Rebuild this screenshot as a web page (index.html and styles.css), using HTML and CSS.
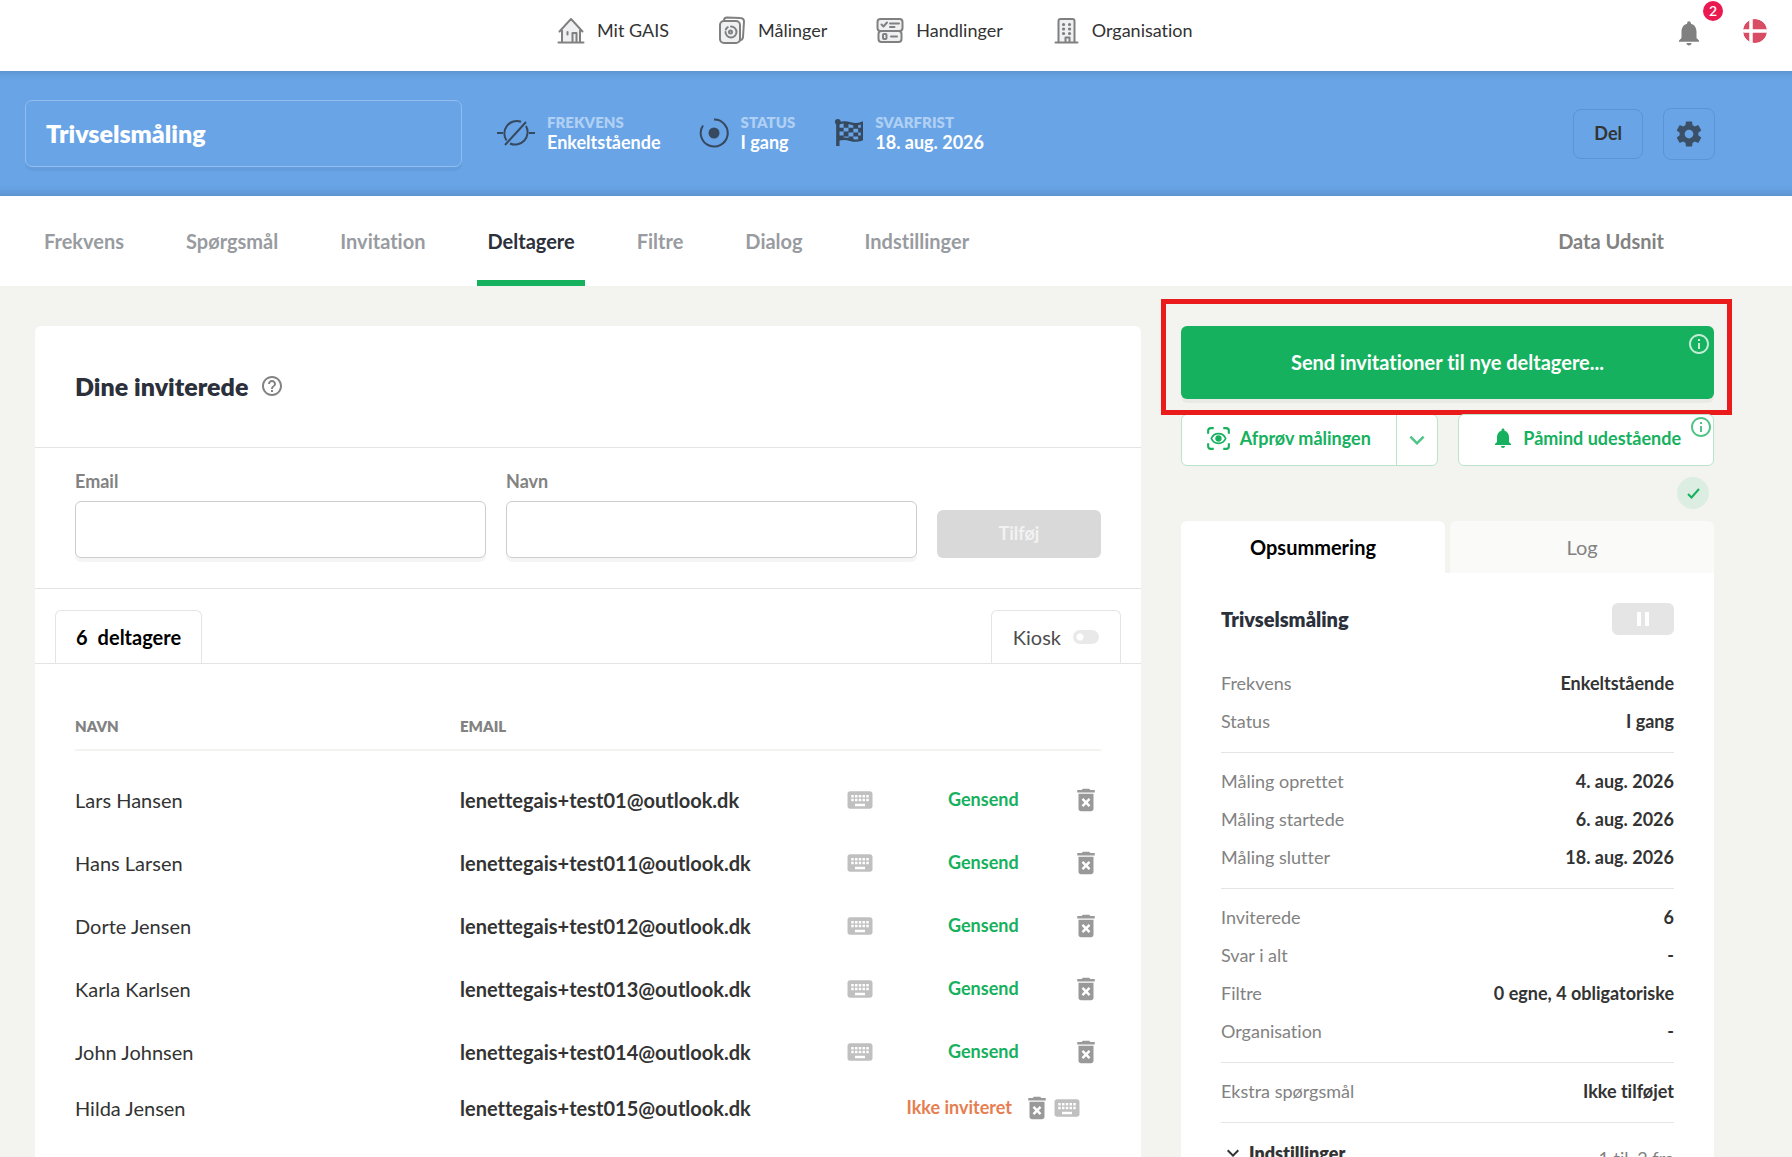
FILE: index.html
```html
<!doctype html>
<html lang="da">
  <head>
    <meta charset="utf-8">
    <title>Trivselsmåling</title>
    <link rel="stylesheet" href="styles.css">
  </head>
  <body>
    <svg class="sprite" aria-hidden="true">
      <symbol id="i-bell" viewBox="0 0 24 24"><path d="M12 22c1.1 0 2-.9 2-2h-4c0 1.1.89 2 2 2zm6-6v-5c0-3.07-1.64-5.64-4.5-6.32V4c0-.83-.67-1.5-1.500-1.500s-1.500.67-1.500 1.500v.68C7.630 5.360 6 7.920 6 11v5l-2 2v1h16v-1l-2-2z"/></symbol>
      <symbol id="i-keyboard" viewBox="0 0 24 24"><path d="M20 5H4c-1.100 0-1.990.9-1.990 2L2 17c0 1.100.9 2 2 2h16c1.100 0 2-.9 2-2V7c0-1.100-.9-2-2-2zm-9 3h2v2h-2V8zm0 3h2v2h-2v-2zM8 8h2v2H8V8zm0 3h2v2H8v-2zm-1 2H5v-2h2v2zm0-3H5V8h2v2zm9 7H8v-2h8v2zm0-4h-2v-2h2v2zm0-3h-2V8h2v2zm3 3h-2v-2h2v2zm0-3h-2V8h2v2z"/></symbol>
      <symbol id="i-trash" viewBox="0 0 24 24"><path d="M6 19c0 1.100.9 2 2 2h8c1.100 0 2-.9 2-2V7H6v12zm2.460-7.120l1.410-1.410L12 12.590l2.120-2.120 1.410 1.410L13.410 14l2.120 2.120-1.410 1.410L12 15.410l-2.120 2.120-1.410-1.410L10.590 14l-2.130-2.120zM15.500 4l-1-1h-5l-1 1H5v2h14V4z"/></symbol>
      <symbol id="i-info" viewBox="0 0 24 24"><path d="M11 7h2v2h-2zm0 4h2v6h-2zm1-9C6.480 2 2 6.480 2 12s4.480 10 10 10 10-4.480 10-10S17.520 2 12 2zm0 18c-4.410 0-8-3.590-8-8s3.590-8 8-8 8 3.590 8 8-3.590 8-8 8z"/></symbol>
      <symbol id="i-chevron" viewBox="0 0 24 24"><path d="M7.410 8.590L12 13.170l4.590-4.580L18 10l-6 6-6-6z"/></symbol>
    </svg>

    <div class="app">
      <header class="topbar">
        <nav class="main-nav">
          <a href="#">
            <svg class="nav-icon" viewBox="0 0 28 28"><path d="M5 15v10h18V15L14 5z" fill="#eef0f2" stroke="none"/><path d="M1.500 26.500h25M5 26V14.500M23 26V14.500M2.500 15.500L14 3l11.500 12.500M10.500 16v2.500M15.500 26v-9h4v9"/></svg>
            Mit GAIS
          </a>
          <a href="#">
            <svg class="nav-icon" viewBox="0 0 28 28"><path d="M6 4.500Q6 1.500 9 1.500l13 .5q4 0 4 3.500L25 21q-.3 3-3 3.500"/><rect x="2" y="5" width="20" height="22" rx="4" fill="#eef0f2"/><path d="M13 10.500a5.500 5.500 0 1 1-5.500 5.500"/><path d="M7.800 13.500a6 6 0 0 1 2-2.300"/><circle cx="12.500" cy="16" r="1.500"/></svg>
            Målinger
          </a>
          <a href="#">
            <svg class="nav-icon" viewBox="0 0 28 28"><rect x="1.500" y="3" width="25" height="12" rx="3" fill="#eef0f2"/><rect x="2.500" y="15" width="23" height="11" rx="3" fill="#eef0f2"/><path d="M5.500 8.500l2 2 3.500-4M14 7.500h9M14 11h4.500M15 20.500h6"/><rect x="7" y="18" width="3.500" height="5" rx="1"/></svg>
            Handlinger
          </a>
          <a href="#">
            <svg class="nav-icon" viewBox="0 0 28 28"><path d="M6.500 26V5q0-2 2-2h12q2 0 2 2v21" fill="#eef0f2"/><path d="M3.500 26.500h22M13.500 26v-4.500h4V26"/><path d="M11.500 8.500h.1M17.500 8.500h.1M11.500 13h.1M17.500 13h.1M11.500 17.500h.1M17.500 17.500h.1" stroke-width="3.200"/></svg>
            Organisation
          </a>
        </nav>
        <div class="top-actions">
          <button class="icon-btn bell" aria-label="Notifikationer">
            <svg class="icon-lg"><use href="#i-bell"/></svg>
            <span class="badge">2</span>
          </button>
          <button class="icon-btn" aria-label="Sprog">
            <svg class="flag" viewBox="0 0 24 24"><circle cx="12" cy="12" r="12" fill="#d84d63"/><path d="M8 0v24M0 12h24" stroke="#fff" stroke-width="3.500"/></svg>
          </button>
        </div>
      </header>

      <section class="survey-bar">
        <input class="survey-name" type="text" value="Trivselsmåling" aria-label="Navn på måling">
        <div class="facts">
          <div class="fact">
            <svg class="fact-icon-wide" viewBox="0 0 38 30"><path d="M0 15h6M32 15h6M24 3.700A12.500 12.500 0 0 0 9.500 22.500M13 25.500A12.500 12.500 0 0 0 29 8M8 27L29 4"/></svg>
            <div><div class="fact-label">Frekvens</div><div class="fact-value">Enkeltstående</div></div>
          </div>
          <div class="fact">
            <svg class="fact-icon" viewBox="0 0 30 30"><path d="M15 1.500A13.500 13.500 0 1 1 4 7.500"/><circle cx="15" cy="15" r="5.500" fill="#36495f" stroke="none"/></svg>
            <div><div class="fact-label">Status</div><div class="fact-value">I gang</div></div>
          </div>
          <div class="fact">
            <svg class="fact-icon" viewBox="-2 -1 31 31"><path d="M3 3v25" stroke-width="3.500"/><circle cx="3" cy="3" r="3" fill="#36495f" stroke="none"/><path d="M4 4.500q6-2 12 0t12-.5v17q-6 2.500-12 .5T4 21" stroke-width="2.500"/><path d="M9 4h5v5H9zM19 5h5v5h-5zM4 9h5v4H4zM14 9h5v5h-5zM24 9h4v5h-4zM9 13h5v5H9zM19 14h5v4h-5zM4 17h5v4H4zM14 18h5v4h-5zM24 17h4v4h-4z" fill="#36495f" stroke="none"/></svg>
            <div><div class="fact-label">Svarfrist</div><div class="fact-value">18. aug. 2026</div></div>
          </div>
        </div>
        <div class="survey-actions">
          <button class="share-btn">Del</button>
          <button class="settings-btn" aria-label="Indstillinger">
            <svg class="icon-lg" viewBox="0 0 24 24"><path d="M19.430 12.980c.04-.32.07-.64.07-.98s-.03-.66-.07-.98l2.110-1.650c.19-.15.24-.42.12-.64l-2-3.460c-.12-.22-.39-.3-.61-.22l-2.490 1c-.52-.4-1.080-.73-1.690-.98l-.38-2.650C14.460 2.180 14.250 2 14 2h-4c-.25 0-.46.18-.49.42l-.38 2.650c-.61.25-1.170.59-1.690.98l-2.490-1c-.23-.09-.49 0-.61.22l-2 3.460c-.13.22-.07.49.12.64l2.110 1.650c-.04.32-.07.65-.07.98s.03.66.07.98l-2.110 1.650c-.19.15-.24.42-.12.64l2 3.460c.12.22.39.3.61.22l2.490-1c.52.4 1.080.73 1.690.98l.38 2.650c.03.24.24.42.49.42h4c.25 0 .46-.18.49-.42l.38-2.650c.61-.25 1.170-.59 1.690-.98l2.490 1c.23.09.49 0 .61-.22l2-3.460c.12-.22.07-.49-.12-.64l-2.110-1.650zM12 15.500c-1.930 0-3.500-1.570-3.500-3.500s1.570-3.500 3.500-3.500 3.500 1.570 3.500 3.500-1.570 3.500-3.500 3.500z"/></svg>
          </button>
        </div>
      </section>

      <nav class="tabs">
        <a href="#">Frekvens</a>
        <a href="#">Spørgsmål</a>
        <a href="#">Invitation</a>
        <a href="#" class="active">Deltagere</a>
        <a href="#">Filtre</a>
        <a href="#">Dialog</a>
        <a href="#">Indstillinger</a>
        <a href="#" class="tab-right">Data Udsnit</a>
      </nav>

      <main class="content">
        <section class="card">
          <div class="card-head">
            <h2>Dine inviterede</h2>
            <svg class="icon-sm" viewBox="0 0 24 24"><path d="M11 18h2v-2h-2v2zm1-16C6.480 2 2 6.480 2 12s4.480 10 10 10 10-4.480 10-10S17.520 2 12 2zm0 18c-4.410 0-8-3.590-8-8s3.590-8 8-8 8 3.590 8 8-3.590 8-8 8zm0-14c-2.210 0-4 1.790-4 4h2c0-1.100.9-2 2-2s2 .9 2 2c0 2-3 1.750-3 5h2c0-2.250 3-2.500 3-5 0-2.210-1.790-4-4-4z"/></svg>
          </div>

          <form class="add-form">
            <div class="field">
              <label for="email">Email</label>
              <input id="email" type="text">
            </div>
            <div class="field">
              <label for="name">Navn</label>
              <input id="name" type="text">
            </div>
            <button class="add-btn" type="button" disabled>Tilføj</button>
          </form>

          <div class="list-tabs">
            <button class="list-tab"><span>6</span><span>deltagere</span></button>
            <label class="list-tab kiosk">Kiosk <input type="checkbox" class="toggle"></label>
          </div>

          <table class="people">
            <thead>
              <tr>
                <th class="col-name">Navn</th>
                <th class="col-email">Email</th>
                <th class="col-kiosk"></th>
                <th class="col-send"></th>
                <th></th>
              </tr>
            </thead>
            <tbody>
              <tr>
                <td>Lars Hansen</td>
                <td class="email">lenettegais+test01@outlook.dk</td>
                <td><svg class="icon-lg light"><use href="#i-keyboard"/></svg></td>
                <td><button class="link-btn">Gensend</button></td>
                <td class="last"><button class="icon-btn" aria-label="Slet"><svg class="icon-lg"><use href="#i-trash"/></svg></button></td>
              </tr>
              <tr>
                <td>Hans Larsen</td>
                <td class="email">lenettegais+test011@outlook.dk</td>
                <td><svg class="icon-lg light"><use href="#i-keyboard"/></svg></td>
                <td><button class="link-btn">Gensend</button></td>
                <td class="last"><button class="icon-btn" aria-label="Slet"><svg class="icon-lg"><use href="#i-trash"/></svg></button></td>
              </tr>
              <tr>
                <td>Dorte Jensen</td>
                <td class="email">lenettegais+test012@outlook.dk</td>
                <td><svg class="icon-lg light"><use href="#i-keyboard"/></svg></td>
                <td><button class="link-btn">Gensend</button></td>
                <td class="last"><button class="icon-btn" aria-label="Slet"><svg class="icon-lg"><use href="#i-trash"/></svg></button></td>
              </tr>
              <tr>
                <td>Karla Karlsen</td>
                <td class="email">lenettegais+test013@outlook.dk</td>
                <td><svg class="icon-lg light"><use href="#i-keyboard"/></svg></td>
                <td><button class="link-btn">Gensend</button></td>
                <td class="last"><button class="icon-btn" aria-label="Slet"><svg class="icon-lg"><use href="#i-trash"/></svg></button></td>
              </tr>
              <tr>
                <td>John Johnsen</td>
                <td class="email">lenettegais+test014@outlook.dk</td>
                <td><svg class="icon-lg light"><use href="#i-keyboard"/></svg></td>
                <td><button class="link-btn">Gensend</button></td>
                <td class="last"><button class="icon-btn" aria-label="Slet"><svg class="icon-lg"><use href="#i-trash"/></svg></button></td>
              </tr>
              <tr class="pending">
                <td>Hilda Jensen</td>
                <td class="email">lenettegais+test015@outlook.dk</td>
                <td colspan="3">
                  <div class="pending-actions">
                    <span class="not-invited">Ikke inviteret</span>
                    <button class="icon-btn" aria-label="Slet"><svg class="icon-lg"><use href="#i-trash"/></svg></button>
                    <svg class="icon-lg light"><use href="#i-keyboard"/></svg>
                  </div>
                </td>
              </tr>
            </tbody>
          </table>
        </section>

        <aside class="side">
          <div class="send-wrap">
            <button class="send-btn">Send invitationer til nye deltagere...</button>
            <svg class="icon-sm info info-white"><use href="#i-info"/></svg>
            <div class="highlight"></div>
          </div>

          <div class="side-actions">
            <div class="split-btn">
              <button class="try-btn">
                <svg class="try-icon" viewBox="0 0 24 24"><path d="M1.200 7V4Q1.200 1.200 4 1.200h3M17 1.200h3q2.800 0 2.800 2.800v3M22.800 17v3q0 2.800-2.800 2.800h-3M7 22.800H4Q1.200 22.800 1.200 20v-3" fill="none" stroke="currentColor" stroke-width="2.200"/><path d="M12 7c-3.500 0-6.200 2-7.500 5 1.300 3 4 5 7.500 5s6.200-2 7.500-5c-1.300-3-4-5-7.500-5z" fill="none" stroke="currentColor" stroke-width="1.800"/><circle cx="12" cy="12" r="3.300"/></svg>
                Afprøv målingen
              </button>
              <button class="more-btn" aria-label="Flere"><svg class="icon-lg"><use href="#i-chevron"/></svg></button>
            </div>
            <div class="remind">
              <button class="remind-btn">
                <svg class="icon-sm"><use href="#i-bell"/></svg>
                Påmind udestående
              </button>
              <svg class="icon-sm info"><use href="#i-info"/></svg>
            </div>
          </div>

          <div class="saved"><svg viewBox="0 0 32 32"><path d="M11 17l3.500 3.500 7.500-8.500"/></svg></div>

          <div class="side-tabs">
            <button class="side-tab active">Opsummering</button>
            <button class="side-tab">Log</button>
          </div>

          <div class="summary">
            <div class="summary-head">
              <h3>Trivselsmåling</h3>
              <button class="pause-btn" aria-label="Pause" disabled><svg viewBox="0 0 14 14"><path d="M1 0h4v14H1zM9 0h4v14H9z"/></svg></button>
            </div>
            <dl>
              <div><dt>Frekvens</dt><dd>Enkeltstående</dd></div>
              <div><dt>Status</dt><dd>I gang</dd></div>
            </dl>
            <dl>
              <div><dt>Måling oprettet</dt><dd>4. aug. 2026</dd></div>
              <div><dt>Måling startede</dt><dd>6. aug. 2026</dd></div>
              <div><dt>Måling slutter</dt><dd>18. aug. 2026</dd></div>
            </dl>
            <dl>
              <div><dt>Inviterede</dt><dd>6</dd></div>
              <div><dt>Svar i alt</dt><dd>-</dd></div>
              <div><dt>Filtre</dt><dd>0 egne, 4 obligatoriske</dd></div>
              <div><dt>Organisation</dt><dd>-</dd></div>
            </dl>
            <dl>
              <div><dt>Ekstra spørgsmål</dt><dd>Ikke tilføjet</dd></div>
            </dl>
            <div class="summary-foot">
              <button class="expand-btn"><svg class="icon-sm"><use href="#i-chevron"/></svg>Indstillinger</button>
              <span>1 til, 2 fra</span>
            </div>
          </div>
        </aside>
      </main>
    </div>
  </body>
</html>
```

FILE: styles.css
```css
:root {
  --green: #16b15e;
  --green-border: #b9e4ca;
  --blue: #68a4e6;
  --dark: #2b303b;
  --text: #333333;
  --muted: #828282;
  --line: #e4e4e4;
  --page: #f3f4ef;
}

* {
  box-sizing: border-box;
}

body {
  margin: 0;
  font-family: Lato, 'Liberation Sans', sans-serif;
  font-size: 18px;
  line-height: 22px;
  font-variant-ligatures: none;
  color: var(--text);
  background: var(--page);
}

a {
  color: inherit;
  text-decoration: none;
}

button,
input {
  font: inherit;
  font-variant-ligatures: none;
  color: inherit;
}

button {
  padding: 0;
  border: 0;
  background: none;
  cursor: pointer;
}

svg {
  display: block;
  flex: none;
  fill: currentColor;
}

h2,
h3 {
  margin: 0;
  color: var(--dark);
}

.sprite {
  position: absolute;
  width: 0;
  height: 0;
}

.icon-lg {
  width: 30px;
  height: 30px;
}

.icon-sm {
  width: 24px;
  height: 24px;
}

.icon-btn {
  color: #999999;
}

.app {
  display: flex;
  flex-direction: column;
  height: 100vh;
  overflow: hidden;
}

/* top bar */
.topbar {
  flex: none;
  display: flex;
  justify-content: space-between;
  align-items: center;
  height: 71px;
  padding: 0 25px 10px 557px;
  background: #ffffff;
}

.main-nav {
  display: flex;
  gap: 49px;
}

.main-nav a {
  display: flex;
  align-items: center;
  gap: 12px;
  line-height: 20px;
  padding-bottom: 1px;
}

.nav-icon {
  width: 28px;
  height: 28px;
  fill: none;
  stroke: #808080;
  stroke-width: 2;
  stroke-linecap: round;
  stroke-linejoin: round;
}

.top-actions {
  display: flex;
  align-items: center;
  gap: 39px;
}

.bell {
  position: relative;
  padding-top: 4px;
  color: #808080;
}

.badge {
  position: absolute;
  top: -13px;
  right: -19px;
  width: 20px;
  border-radius: 50%;
  font-size: 14px;
  line-height: 20px;
  font-weight: 600;
  color: #ffffff;
  background: #ea1a50;
}

.flag {
  width: 24px;
  height: 24px;
  border-radius: 50%;
}

/* survey bar */
.survey-bar {
  flex: none;
  display: flex;
  align-items: center;
  height: 125px;
  padding: 0 77px 0 25px;
  background: var(--blue);
  box-shadow: inset 0 9px 9px -9px rgba(0, 0, 0, 0.2),
    inset 0 -12px 12px -12px rgba(0, 0, 0, 0.2);
}

.survey-name {
  width: 437px;
  height: 67px;
  padding: 0 20px 2px;
  border: 1px solid #92bdee;
  border-radius: 7px;
  font-size: 25px;
  font-weight: 800;
  color: #ffffff;
  background: transparent;
  box-shadow: 0 4px 0 rgba(0, 0, 0, 0.04);
}

.facts {
  display: flex;
  gap: 38px;
  margin-left: 35px;
  padding-bottom: 2px;
}

.fact {
  display: flex;
  align-items: center;
  gap: 12px;
}

.fact-icon,
.fact-icon-wide {
  width: 30px;
  height: 30px;
  fill: none;
  stroke: #36495f;
  stroke-width: 2;
}

.fact-icon-wide {
  width: 38px;
}

.fact-label {
  font-size: 15px;
  line-height: 18px;
  font-weight: 800;
  text-transform: uppercase;
  color: #afcff4;
}

.fact-value {
  font-weight: 700;
  color: #ffffff;
}

.survey-actions {
  display: flex;
  align-items: center;
  gap: 20px;
  margin-left: auto;
}

.share-btn,
.settings-btn {
  height: 50px;
  padding: 0 20px 2px;
  border: 1px solid #5c95d6;
  border-radius: 8px;
  font-weight: 700;
}

.settings-btn {
  height: 52px;
  padding: 0 10px;
  color: #3b4f66;
}

/* tabs */
.tabs {
  flex: none;
  display: flex;
  gap: 42px;
  height: 90px;
  padding: 0 118px 0 34px;
  font-size: 20px;
  line-height: 90px;
  font-weight: 700;
  color: #989ba0;
  background: #ffffff;
}

.tabs a {
  padding: 0 10px;
}

.tabs .active {
  color: var(--dark);
  box-shadow: inset 0 -6px 0 var(--green);
}

.tabs .tab-right {
  margin-left: auto;
  color: var(--muted);
}

/* content */
.content {
  flex: 1;
  display: flex;
  align-items: stretch;
  gap: 40px;
  min-height: 0;
  padding: 40px 78px 0 35px;
}

.card {
  flex: 1;
  border-radius: 6px 6px 0 0;
  background: #ffffff;
}

.card-head {
  display: flex;
  align-items: center;
  gap: 12px;
  height: 122px;
  padding: 0 40px 2px;
  border-bottom: 1px solid var(--line);
  color: var(--muted);
}

.card-head h2 {
  font-size: 25px;
  line-height: 30px;
  font-weight: 800;
}

.add-form {
  display: flex;
  align-items: flex-end;
  gap: 20px;
  padding: 22px 40px 30px;
  border-bottom: 1px solid var(--line);
}

.field {
  flex: 1;
}

.field label {
  display: block;
  margin-bottom: 9px;
  font-weight: 700;
  color: var(--muted);
}

.field input {
  display: block;
  width: 100%;
  height: 57px;
  padding: 0 16px;
  border: 1px solid #cccccc;
  border-radius: 6px;
  box-shadow: 0 4px 0 rgba(0, 0, 0, 0.04);
}

.add-btn {
  width: 164px;
  height: 48px;
  padding-bottom: 2px;
  border-radius: 6px;
  font-weight: 700;
  color: #f2f2f2;
  background: #d9d9d9;
}

.list-tabs {
  display: flex;
  justify-content: space-between;
  padding: 21px 20px 0;
  border-bottom: 1px solid var(--line);
}

.list-tab {
  display: flex;
  align-items: center;
  gap: 10px;
  height: 53px;
  padding: 0 20px;
  border: 1px solid var(--line);
  border-bottom: 0;
  border-radius: 6px 6px 0 0;
  font-size: 20px;
  font-weight: 700;
  color: #000000;
}

.kiosk {
  gap: 12px;
  padding: 0 21px;
  font-weight: 400;
  color: #4d4d4d;
}

.toggle {
  appearance: none;
  width: 26px;
  height: 14px;
  margin: 0;
  border-radius: 7px;
  background: radial-gradient(circle at 7px 7px, #ffffff 3px, #e9e9e9 4px);
}

.people {
  width: calc(100% - 80px);
  margin: 44px 40px 0;
  border-collapse: separate;
  border-spacing: 0;
  table-layout: fixed;
  text-align: left;
}

.people th {
  height: 43px;
  padding: 0 0 6px;
  border-bottom: 2px solid #f3f4ef;
  font-size: 15px;
  font-weight: 800;
  text-transform: uppercase;
  color: var(--muted);
}

.people td {
  height: 63px;
  padding: 0;
  font-size: 20px;
}

.people tbody::before {
  content: '';
  display: block;
  height: 17px;
}

.col-name {
  width: 385px;
}

.col-email {
  width: 385px;
}

.col-kiosk {
  width: 103px;
}

.col-send {
  width: 100px;
}

.people .email {
  font-weight: 700;
}

.people .last .icon-btn {
  display: block;
  margin-left: auto;
}

.people .pending td {
  height: 49px;
}

.link-btn {
  display: block;
  padding-bottom: 2px;
  font-size: 18px;
  font-weight: 700;
  color: var(--green);
}

.light {
  color: #c0c0c0;
}

.pending-actions {
  display: flex;
  align-items: center;
  justify-content: flex-end;
  padding-right: 19px;
}

.not-invited {
  margin-right: 10px;
  padding-bottom: 2px;
  font-size: 18px;
  font-weight: 700;
  color: #e67e50;
}

/* side column */
.side {
  flex: none;
  display: flex;
  flex-direction: column;
  width: 533px;
}

.send-wrap {
  position: relative;
}

.send-btn {
  width: 100%;
  height: 73px;
  padding-bottom: 2px;
  border-radius: 6px;
  font-size: 20px;
  font-weight: 700;
  color: #ffffff;
  background: var(--green);
  box-shadow: 0 4px 0 rgba(0, 0, 0, 0.04);
}

.info {
  position: absolute;
  top: 6px;
  right: 3px;
  opacity: 0.75;
}

.info-white {
  color: #ffffff;
}

.highlight {
  position: absolute;
  inset: -27px -18px -16px -20px;
  border: 5px solid #e91b1b;
  pointer-events: none;
}

.side-actions {
  display: flex;
  gap: 20px;
  margin-top: 15px;
  font-weight: 700;
  color: var(--green);
}

.split-btn,
.remind {
  flex: 1;
  display: flex;
  height: 52px;
  border: 1px solid var(--green-border);
  border-radius: 6px;
  background: #ffffff;
}

.try-btn {
  flex: 1;
  display: flex;
  align-items: center;
  justify-content: center;
  gap: 10px;
  padding-bottom: 4px;
}

.try-icon {
  width: 23px;
  height: 23px;
}

.more-btn {
  padding: 0 5px;
  border-left: 1px solid var(--green-border);
}

.more-btn svg {
  opacity: 0.75;
}

.remind {
  position: relative;
}

.remind .info {
  top: 0;
  right: 0;
}

.remind-btn {
  flex: 1;
  display: flex;
  align-items: center;
  justify-content: flex-end;
  gap: 8px;
  padding: 0 32px 4px 0;
}

.saved {
  align-self: flex-end;
  width: 32px;
  height: 32px;
  margin: 11px 5px 12px 0;
  border-radius: 50%;
  background: #dcede2;
}

.saved svg {
  fill: none;
  stroke: var(--green);
  stroke-width: 2;
}

.side-tabs {
  display: flex;
  gap: 5px;
}

.side-tab {
  flex: 1;
  height: 52px;
  border-radius: 6px 6px 0 0;
  font-size: 20px;
  color: var(--muted);
  background: #fafaf8;
}

.side-tab.active {
  font-weight: 700;
  color: #000000;
  background: #ffffff;
}

.summary {
  flex: 1;
  padding: 30px 40px 0;
  background: #ffffff;
}

.summary-head {
  display: flex;
  justify-content: space-between;
  align-items: center;
  margin-bottom: 20px;
}

.summary-head h3 {
  font-size: 20px;
  line-height: 24px;
  font-weight: 800;
}

.pause-btn {
  width: 62px;
  height: 32px;
  border-radius: 6px;
  color: #ffffff;
  background: #e5e5e5;
}

.pause-btn svg {
  width: 14px;
  height: 14px;
  margin: auto;
}

.summary dl {
  margin: 0;
  padding: 9px 0 12px;
  border-bottom: 1px solid var(--line);
}

.summary dl div {
  display: flex;
  justify-content: space-between;
  line-height: 38px;
}

.summary dt,
.summary-foot span {
  color: var(--muted);
}

.summary dd {
  margin: 0;
  font-weight: 700;
}

.summary-foot {
  display: flex;
  justify-content: space-between;
  align-items: flex-start;
  padding-top: 18px;
}

.summary-foot span {
  padding-top: 6px;
}

.expand-btn {
  display: flex;
  align-items: center;
  gap: 4px;
  font-weight: 800;
}
```
